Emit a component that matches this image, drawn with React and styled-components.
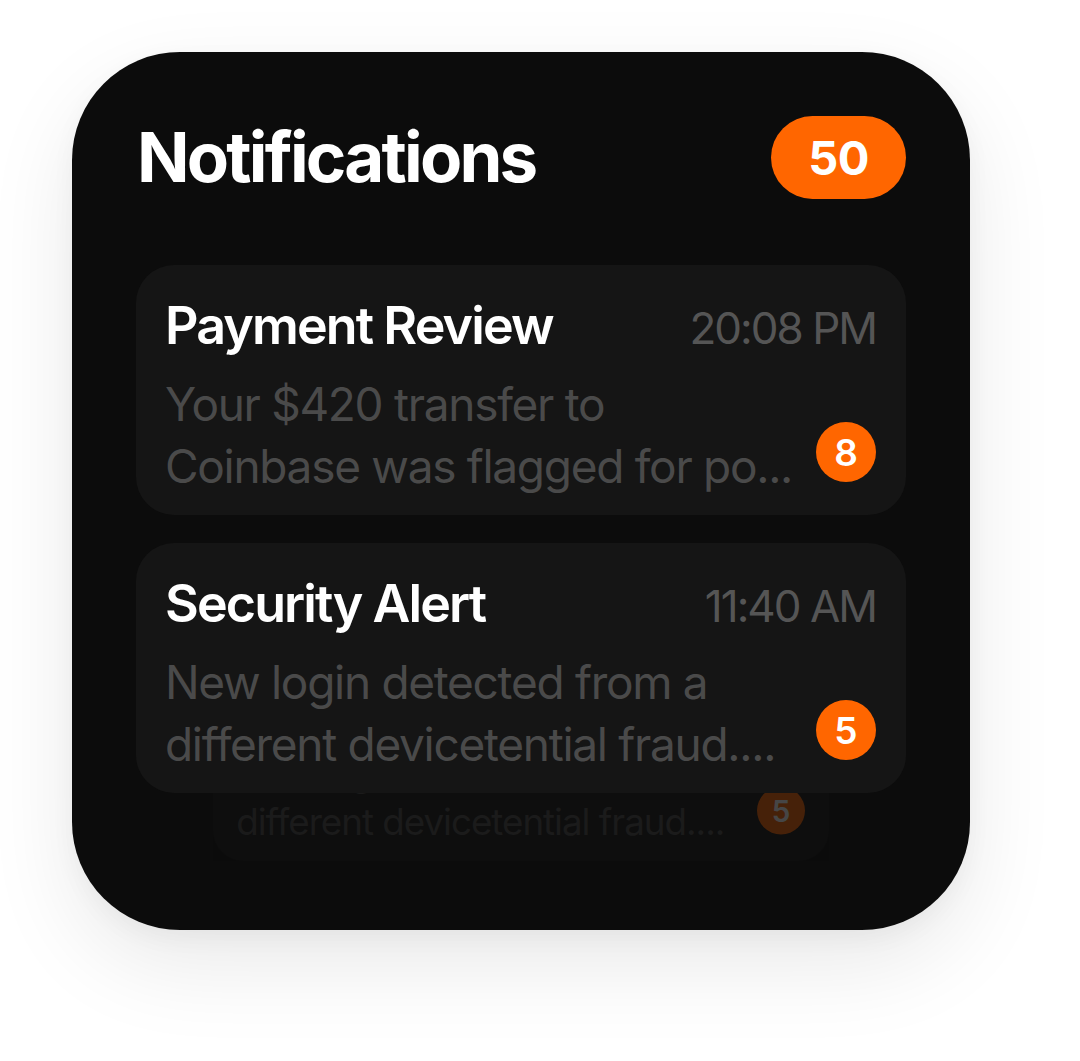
import React from "react";
import styled, { createGlobalStyle } from "styled-components";

const Global = createGlobalStyle`
  html, body { margin: 0; padding: 0; background: #ffffff; }
  body { font-family: Inter, "Noto Sans", sans-serif; -webkit-font-smoothing: antialiased; }
`;

const Page = styled.div`
  padding: 52px 0 0 72px;
  height: 1061px;
  box-sizing: border-box;
`;

const Widget = styled.div`
  width: 898px;
  height: 878px;
  box-sizing: border-box;
  padding: 64px 64px 0 64px;
  background: #0c0c0c;
  border-radius: 108px;
  box-shadow: 0 34px 90px rgba(0, 0, 0, 0.09), 0 8px 24px rgba(0, 0, 0, 0.04);
  display: flex;
  flex-direction: column;
  overflow: hidden;
`;

const Header = styled.div`
  display: flex;
  align-items: center;
  justify-content: space-between;
  height: 83px;
`;

const Title = styled.h1`
  margin: 0 0 0 1px;
  color: #ffffff;
  font-size: 69px;
  font-weight: 700;
  letter-spacing: -2.8px;
  line-height: 1;
`;

const CountPill = styled.div`
  height: 83px;
  min-width: 135px;
  box-sizing: border-box;
  border-radius: 42px;
  background: #ff6600;
  color: #ffffff;
  font-size: 47px;
  font-weight: 700;
  letter-spacing: -0.5px;
  display: flex;
  align-items: center;
  justify-content: center;
`;

const List = styled.div`
  position: relative;
  margin-top: 66px;
  display: flex;
  flex-direction: column;
  gap: 28px;
`;

const Card = styled.div`
  position: relative;
  z-index: 1;
  height: 250px;
  box-sizing: border-box;
  padding: 26px 30px 0 29px;
  background: #151515;
  border-radius: 38px;
  display: flex;
  flex-direction: column;
`;

const GhostCard = styled(Card)`
  position: absolute;
  left: 0;
  right: 0;
  top: 371px;
  z-index: 0;
  opacity: 0.24;
  transform: scale(0.8);
  transform-origin: 50% 50%;
`;

const CardTop = styled.div`
  display: flex;
  align-items: baseline;
  justify-content: space-between;
  height: 70px;
`;

const CardTitle = styled.div`
  color: #ffffff;
  font-size: 52px;
  font-weight: 600;
  letter-spacing: -1.9px;
  line-height: 70px;
`;

const Time = styled.div`
  color: #555555;
  font-size: 44px;
  font-weight: 400;
  letter-spacing: -2px;
  line-height: 70px;
`;

const CardBody = styled.div`
  display: flex;
  align-items: flex-end;
  justify-content: space-between;
  margin-top: 12px;
`;

const Message = styled.div`
  color: #4a4a4a;
  font-size: 46px;
  font-weight: 400;
  letter-spacing: -1.3px;
  line-height: 62px;
`;

const Line = styled.span`
  display: block;
  white-space: nowrap;
`;

const Dot = styled.div`
  width: 60px;
  height: 60px;
  border-radius: 50%;
  background: #ff6600;
  color: #ffffff;
  font-size: 37px;
  font-weight: 600;
  display: flex;
  align-items: center;
  justify-content: center;
  margin-bottom: 15px;
  flex-shrink: 0;
`;

const items = [
  {
    title: "Payment Review",
    time: "20:08 PM",
    lines: ["Your $420 transfer to", "Coinbase was flagged for po..."],
    count: 8,
  },
  {
    title: "Security Alert",
    time: "11:40 AM",
    lines: ["New login detected from a", "different devicetential fraud...."],
    count: 5,
  },
];

function NotificationContent({ item }) {
  return (
    <>
      <CardTop>
        <CardTitle>{item.title}</CardTitle>
        <Time>{item.time}</Time>
      </CardTop>
      <CardBody>
        <Message>
          {item.lines.map((l) => (
            <Line key={l}>{l}</Line>
          ))}
        </Message>
        <Dot>{item.count}</Dot>
      </CardBody>
    </>
  );
}

export default function App() {
  return (
    <>
      <Global />
      <Page>
        <Widget>
          <Header>
            <Title>Notifications</Title>
            <CountPill>50</CountPill>
          </Header>
          <List>
            {items.map((item) => (
              <Card key={item.title}>
                <NotificationContent item={item} />
              </Card>
            ))}
            <GhostCard aria-hidden="true">
              <NotificationContent item={items[1]} />
            </GhostCard>
          </List>
        </Widget>
      </Page>
    </>
  );
}
